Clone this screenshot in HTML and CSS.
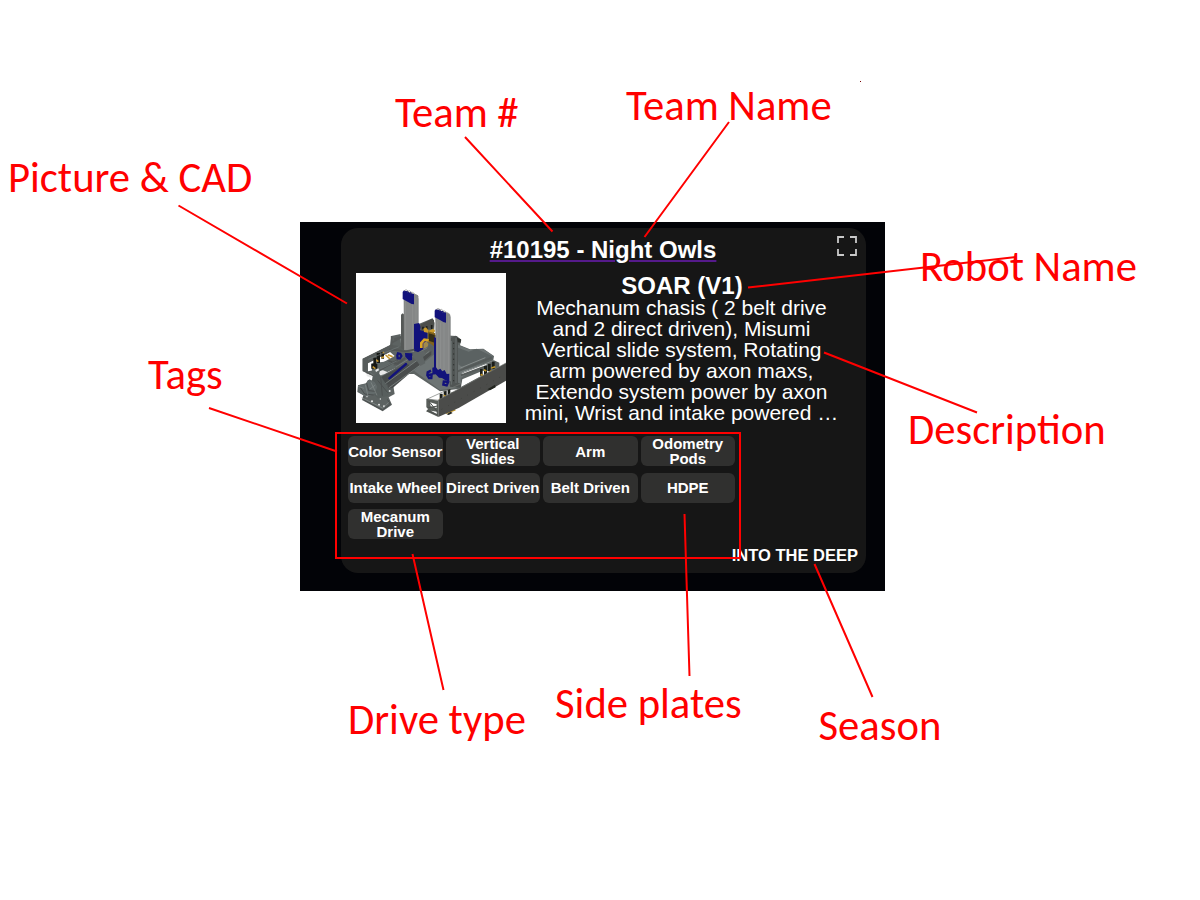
FILE: index.html
```html
<!DOCTYPE html>
<html lang="en">
<head>
<meta charset="utf-8">
<title>Robot card guide</title>
<link rel="stylesheet" href="styles.css">
</head>
<body>
<main class="guide">
  <section class="backdrop">
    <article class="card">
      <a class="team">#10195 - Night Owls</a>
      <svg class="expand" viewBox="0 0 20 20"><path d="M1 7V1H7M13 1H19V7M19 13V19H13M7 19H1V13"/></svg>
      <div class="summary">
        <svg class="photo" viewBox="18 15 450 450">
          <rect x="18" y="15" width="450" height="450" fill="#fff"/>
          <path fill="#5d6362" d="M38 272L120 232 124 204 152 198 153 228 205 190 206 168 248 151 254 165 252 200 320 204 334 215 330 232 360 244 400 242 432 264 430 276 448 284 448 300 330 362 270 370 192 318 160 318 130 354 134 378 116 388 126 410 98 430 36 396 40 382 22 372 24 352 48 346 54 336 74 340 78 328 38 308z"/>
          <path fill="#6d7474" d="M192 308L300 220 360 246 400 243 430 265 332 330 334 358 270 366z"/>
          <path fill="#5b6262" d="M318 237L356 251 380 242 430 266 424 276 350 304 326 290z"/>
          <path fill="#fff" d="M54 286L120 252 134 264 78 295 74 306 54 310z"/>
          <path fill="#575c5b" d="M38 272L122 230 160 236 160 245 124 250 52 286 48 314 38 310z"/>
          <path stroke="#565a59" stroke-width="5" fill="none" d="M125 204V237M132 214L158 205M124 225L160 204M48 313L78 326M83 320L165 270"/>
          <path fill="#555857" d="M153 140L158 136 165 142V248L153 240z"/>
          <path fill="#858787" d="M161 90L165 68 204 82 206 92V165L192 176V252L162 246z"/>
          <path stroke="#929493" stroke-width="2" d="M167 98V245M187 105V245M198 90V168"/>
          <path fill="#12127b" d="M158 72L162 67 168 70 173 68 178 74 183 72 188 78 192 77V109L185 108 170 100 158 93z"/>
          <path stroke="#8a8a86" stroke-width="2" fill="none" d="M162 69L168 65 176 70M172 72L178 68 186 74M182 77L188 73 196 79M192 82L198 79 205 86"/>
          <path fill="#12127b" d="M192 168L207 165 212 176 210 187 224 187 232 184V245L205 253 192 248z"/>
          <path fill="#4c4e4b" d="M211 170L246 152 252 157V178L215 190z"/>
          <path stroke="#191b18" stroke-width="5" d="M219 176V184M230 175V190M245 171V183"/>
          <path fill="#c99a2a" d="M220 182L228 178 236 188 250 182 256 189 246 198 233 194 222 192z"/>
          <path fill="#80621d" d="M234 190L256 196V238L234 222z"/>
          <path fill="#342d17" d="M236 196L254 201V224L236 218z"/>
          <path fill="none" stroke="#daa526" stroke-width="8" d="M214 240V225L223 215 236 217"/>
          <path fill="#a28a4b" d="M220 226L230 219 235 228 232 242 220 243z"/>
          <path fill="#5b605f" d="M82 324L240 232 250 238 246 252 126 348 104 356 82 338z"/>
          <path fill="#4a4d4d" d="M116 338L244 249V260L128 360 110 362z"/>
          <path fill="#464a4a" d="M87 330L170 287 180 292 112 350 88 344z"/>
          <path stroke="#747b7a" stroke-width="3" d="M88 327L232 239M102 350L238 250M116 360L216 288"/>
          <path stroke="#12127b" stroke-width="7" stroke-linecap="round" d="M118 331L168 288"/>
          <path fill="none" stroke="#12127b" stroke-width="7" d="M144 256L151 258 154 264 150 271 143 271 142 262z"/>
          <path fill="#12127b" d="M165 255L187 256 186 276 177 278 166 266z"/>
          <path fill="#5f6565" d="M190 256L222 248 228 258 219 266 226 286 211 294 198 276 188 267z"/>
          <path fill="#e8e8e8" d="M90 306L122 296 135 301 104 318 86 324z"/>
          <path fill="#606867" d="M64 286L128 278 132 290 86 311 66 310zM92 304L128 290 142 298 112 312z"/>
          <g fill="#171916"><path d="M64 288h18v14H64zM70 269h9v22H70zM80 255h10v30H80zM94 252h8v20H94z"/></g>
          <path stroke="#c6972f" stroke-width="5" d="M68 296L76 302M79 276L85 281M94 270L102 266M107 261L120 273M114 260L128 266M99 252L102 256"/>
          <path stroke="#505454" stroke-width="5" fill="none" d="M118 244L166 250 193 245M115 278L142 288 166 270M90 306L143 276"/>
          <path stroke="#707878" stroke-width="2" fill="none" d="M55 274L148 236M58 312L82 329M84 306L140 279"/>
          <path fill="#585f5e" d="M68 325L86 314 112 355 120 374 113 384 84 391 60 370z"/>
          <path fill="#636b6b" d="M24 352L48 347 58 334 74 342 82 356 74 377 50 388 25 371z"/>
          <path fill="none" stroke="#4c5050" stroke-width="3" d="M31 359L44 378 71 381M50 345L56 368 77 370M83 337L113 374M92 326L97 383M42 384L42 396 97 426 121 409 112 394"/>
          <g fill="#e9eaea"><circle cx="51" cy="386" r="2"/><circle cx="66" cy="400" r="3"/><circle cx="87" cy="410" r="3"/><circle cx="102" cy="415" r="3"/><circle cx="91" cy="393" r="2"/><circle cx="119" cy="369" r="3"/><path d="M50 317l16 7-4 5-12-5zM76 306l9-5 2 6-9 5z"/></g>
          <path stroke="#858c8b" stroke-width="2" fill="none" d="M24 355L42 361M46 350L54 384M63 343L81 382M35 389L98 420 116 403M60 363L76 351"/>
          <path fill="#505554" d="M292 217L316 203 324 208V344L333 347V360L300 356z"/>
          <path fill="#303431" d="M321 209L333 214 332 224 323 223z"/>
          <path stroke="#767d7b" stroke-width="2" d="M304 219V350M318 209V345"/>
          <path stroke="#2e312f" stroke-width="3" stroke-dasharray="4 12" d="M311 224V340"/>
          <path fill="#858787" d="M256 151L262 124 298 137 302 146V340L290 340 257 312z"/>
          <path stroke="#929494" stroke-width="2" d="M263 160V303M272 164V312M282 164V321M296 144V334"/>
          <path fill="#12127b" d="M254 128L258 123 264 126 269 124 274 130 279 128 284 134 288 133V164L280 162 270 156 254 148z"/>
          <path stroke="#8a8a86" stroke-width="2" fill="none" d="M258 125L264 121 272 126M268 128L274 124 282 130M278 133L284 129 292 135M288 138L294 134 301 142"/>
          <path fill="#12127b" d="M252 207L258 210V298L264 306 271 302 277 310 284 306 290 318 298 317V341L286 337 276 330 267 329 257 319 247 320V299L252 298z"/>
          <path fill="none" stroke="#12127b" stroke-width="7" d="M243 308L233 313 232 322 237 330 244 330 245 319 235 321M282 337L280 350 290 352 294 343 284 340"/>
          <path fill="#fff" d="M338 313L406 288 414 291 336 322z"/>
          <path stroke="#555a59" stroke-width="6" d="M323 310L425 269M333 322L438 283"/>
          <path stroke="#858b8a" stroke-width="3" d="M331 300L406 269M334 316L432 277"/>
          <path fill="#fff" d="M337 334L398 308 420 310 333 357z"/>
          <g fill="#1b1e1a"><path d="M390 303h8v20H390zM402 294h9v29h-9zM414 288h8v22h-8zM426 281h8v22h-8zM269 377h9v20h-9zM281 368h9v22h-9zM293 363h8v20h-8zM305 372h8v10h-8z"/></g>
          <path stroke="#c29629" stroke-width="5" d="M392 319L402 325M401 305L409 309M424 300L436 296M418 312L425 308M268 394L278 398M281 382L290 387M302 380L311 375M288 436L316 425"/>
          <path fill="#4b4c4a" d="M265 396L468 285V338L326 420 265 447z"/>
          <path stroke="#727773" stroke-width="2" fill="none" d="M232 393L333 347M232 393L267 397M265 396L468 285"/>
          <path fill="#595e5a" d="M229 392L265 398V447L228 430 235 422 229 418z"/>
          <path fill="#fff" d="M240 403L260 409V420L242 415zM243 428L260 431V438z"/>
          <path stroke="#4b4f4d" stroke-width="3" fill="none" d="M236 399L262 431M232 420L263 414M232 428L265 442"/>
          <path fill="#22251f" d="M412 364L435 350 437 358 420 367zM290 439L302 431 308 435 296 441z"/>
          <path stroke="#353833" stroke-width="2" stroke-dasharray="2 20" d="M275 424L460 322"/>
        </svg>
        <div class="about">
          <h2 class="robot">SOAR (V1)</h2>
          <p class="description">Mechanum chasis ( 2 belt drive<br>and 2 direct driven), Misumi<br>Vertical slide system, Rotating<br>arm powered by axon maxs,<br>Extendo system power by axon<br>mini, Wrist and intake powered …</p>
        </div>
      </div>
      <div class="tags">
        <span class="tag">Color Sensor</span><span class="tag">Vertical<br>Slides</span><span class="tag">Arm</span><span class="tag">Odometry<br>Pods</span>
        <span class="tag">Intake Wheel</span><span class="tag">Direct Driven</span><span class="tag">Belt Driven</span><span class="tag">HDPE</span>
        <span class="tag">Mecanum<br>Drive</span>
      </div>
      <div class="season">INTO THE DEEP</div>
    </article>
  </section>
  <svg class="callouts" viewBox="0 0 1200 900">
    <path class="pointer" d="M465 137L552.5 231.5M729 122L644.5 237M178.500 205.500L347 303.500M748 287.500L1016 257M824 352.500L977 412.500M209 408L337 451.500M412.500 554L443.500 690M684.500 514L689.500 676M814.500 564L872.500 697"/>
    <rect class="pointer" x="336" y="433" width="404" height="125"/>
    <rect x="860" y="81" width="1" height="1" fill="#700"/>
    <g class="labels">
      <text x="395" y="127">Team #</text>
      <text x="626" y="120">Team Name</text>
      <text x="8" y="192">Picture &amp; CAD</text>
      <text x="920" y="281">Robot Name</text>
      <text x="148" y="389">Tags</text>
      <text x="908" y="444">Description</text>
      <text x="348" y="734">Drive type</text>
      <text x="555" y="718">Side plates</text>
      <text x="818.500" y="740">Season</text>
    </g>
  </svg>
</main>
</body>
</html>
```
FILE: styles.css
```css
body {
  margin: 0;
  background: #fff;
  font-family: "Liberation Sans", Arial, sans-serif;
}
.guide {
  position: relative;
  box-sizing: border-box;
  width: 1200px;
  height: 900px;
  padding: 222px 0 0 300px;
  overflow: hidden;
}
.backdrop {
  box-sizing: border-box;
  width: 585px;
  height: 369px;
  padding: 6px 19px 18px 41px;
  background: #020307;
}
.card {
  position: relative;
  display: flex;
  flex-direction: column;
  box-sizing: border-box;
  height: 345px;
  padding: 8px 8px 8px 7px;
  border-radius: 17px;
  background: #161616;
  color: #fff;
}
.team {
  align-self: center;
  height: 37px;
  font-size: 24px;
  font-weight: 700;
  line-height: 28px;
  text-decoration: underline #551a8b 2px;
  text-underline-offset: 2px;
}
.expand {
  position: absolute;
  top: 8px;
  right: 9px;
  width: 20px;
  height: 20px;
  fill: none;
  stroke: #c9c9c9;
  stroke-width: 1.8;
}
.summary {
  display: flex;
  height: 150px;
  padding: 0 1px 0 8px;
}
.photo {
  flex: none;
  width: 150px;
  height: 150px;
}
.about {
  flex: 1;
  text-align: center;
  white-space: nowrap;
}
.robot {
  margin: 0;
  padding: 1px 0 0 1px;
  font-size: 24px;
  line-height: 24px;
}
.description {
  margin: -1px 0 0;
  font-size: 21px;
  line-height: 21px;
}
.tags {
  display: grid;
  grid-template-columns: repeat(4, 94.5px);
  grid-auto-rows: 30px;
  gap: 6.5px 3px;
  margin-top: 13px;
}
.tag {
  display: flex;
  align-items: center;
  justify-content: center;
  border-radius: 6px;
  background: #30302f;
  font-size: 15px;
  font-weight: 700;
  line-height: 15px;
  text-align: center;
  white-space: nowrap;
}
.season {
  margin-top: auto;
  font-size: 16.5px;
  font-weight: 700;
  line-height: 20px;
  text-align: right;
}
.callouts {
  position: absolute;
  inset: 0;
  width: 1200px;
  height: 900px;
}
.pointer {
  fill: none;
  stroke: #f00;
  stroke-width: 2;
}
.labels {
  fill: #f00;
  font-family: Carlito, Calibri, sans-serif;
  font-size: 42.67px;
}
```
